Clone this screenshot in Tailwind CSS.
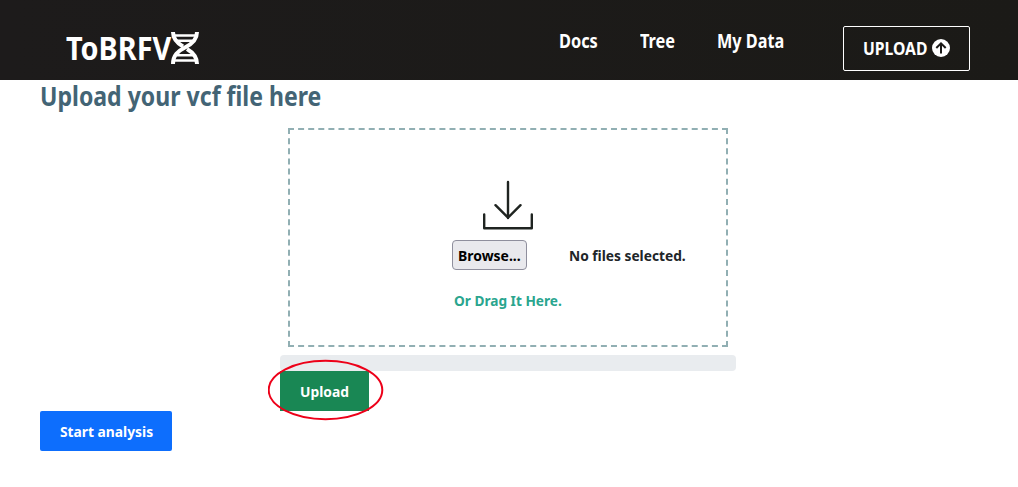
<!DOCTYPE html>
<html lang="en">
<head>
<meta charset="utf-8">
<title>ToBRFV</title>
<script src="https://cdn.jsdelivr.net/npm/@tailwindcss/browser@4"></script>
</head>
<body class="h-[487px] overflow-hidden bg-white font-['Noto_Sans','Open_Sans',sans-serif] font-bold text-[#212529]">
<header class="flex h-20 bg-gradient-to-r from-[#1d1b1b] to-[#1b1a17] text-white">
  <a class="ml-[66px] mt-[31px] flex h-[34px] w-[134px]">
    <span class="block w-[104px] origin-left scale-x-[.9] whitespace-nowrap text-[32px] leading-[34px]">ToBRFV</span>
    <svg class="mt-px h-8 w-[30px] shrink-0" viewBox="0 0 30 32" fill="none" stroke="#fff">
      <path stroke-width="4" d="M27 0C27 8 22 12 15 15.5S3 23 3 32"/>
      <path stroke-width="4" d="M3 0C3 7 7 11 13 14.5M17 17C23 20.5 27 25 27 32"/>
      <path stroke-width="2.6" d="M4 3.5h22M7 8.7h16M7 23.3h16M4 28.5h22"/>
    </svg>
  </a>
  <nav class="ml-[359px] mt-[27px] flex h-7 text-[19px] leading-7">
    <a class="w-[81px]"><span class="block origin-left scale-x-[.86] whitespace-nowrap">Docs</span></a>
    <a class="w-[77px]"><span class="block origin-left scale-x-[.86] whitespace-nowrap">Tree</span></a>
    <a class="w-[126px]"><span class="block origin-left scale-x-[.855] whitespace-nowrap">My Data</span></a>
  </nav>
  <a class="mt-[26px] flex h-[45px] w-[127px] items-center rounded-[2px] border border-white pl-[19px]">
    <span class="block w-[69px] origin-left scale-x-[.87] whitespace-nowrap text-[18px]">UPLOAD</span>
    <svg class="-mt-px size-[18px] shrink-0" viewBox="0 0 18 18"><circle cx="9" cy="9" r="9" fill="#fff"/><path d="M9 14.5V4.5M4.3 9L9 4.3 13.7 9" fill="none" stroke="#1b1a18" stroke-width="2"/></svg>
  </a>
</header>
<main class="pl-10">
  <h1 class="h-12 origin-left scale-x-[.887] whitespace-nowrap text-[26px] leading-[32px] text-[#436475]">Upload your vcf file here</h1>
  <section class="ml-[248px] h-[219px] w-[440px] border-2 border-dashed border-[#91afb3] pt-[50px]">
    <svg class="ml-[192px] h-[50px] w-[52px]" viewBox="0 0 52 50" fill="none" stroke="#1f2421" stroke-width="2.4" stroke-linecap="round" stroke-linejoin="round"><path d="M26 2v36M13.5 25.2L26 37.7l12.5-12.5M2.2 34.5v13.8h47.6V34.5"/></svg>
    <div class="ml-[162px] mt-[10px] flex h-[30px] items-center text-[15px]">
      <button class="h-[30px] w-[75px] rounded-[4px] border border-[#8f8f9d] bg-[#e9e9ed] pl-[5px] text-left text-black"><span class="block origin-left scale-x-[.93] whitespace-nowrap">Browse...</span></button>
      <span class="ml-[42px] block origin-left scale-x-[.916] whitespace-nowrap">No files selected.</span>
    </div>
    <p class="ml-[164px] mt-[19px] origin-left scale-x-[.91] whitespace-nowrap text-[15px] leading-[22px] text-[#2aa58e]">Or Drag It Here.</p>
  </section>
  <div class="ml-[240px] mt-2 h-4 w-[456px] rounded-[4px] bg-[#e9ecef]"></div>
  <div class="relative ml-[240px] h-10 w-[89px]">
    <button class="h-10 w-[89px] bg-[#198754] pl-5 text-left text-[15px] text-white"><span class="block origin-left scale-x-[.92] whitespace-nowrap">Upload</span></button>
    <svg class="absolute -left-3 -top-3 h-[62px] w-[116px]" viewBox="0 0 116 62"><ellipse cx="57.5" cy="31" rx="56.8" ry="29.2" fill="none" stroke="#ed0019" stroke-width="2"/></svg>
  </div>
  <button class="block h-10 w-[132px] rounded-[2px] bg-[#0d6efd] pl-5 text-left text-[15px] text-white"><span class="block origin-left scale-x-[.92] whitespace-nowrap">Start analysis</span></button>
</main>
</body>
</html>
